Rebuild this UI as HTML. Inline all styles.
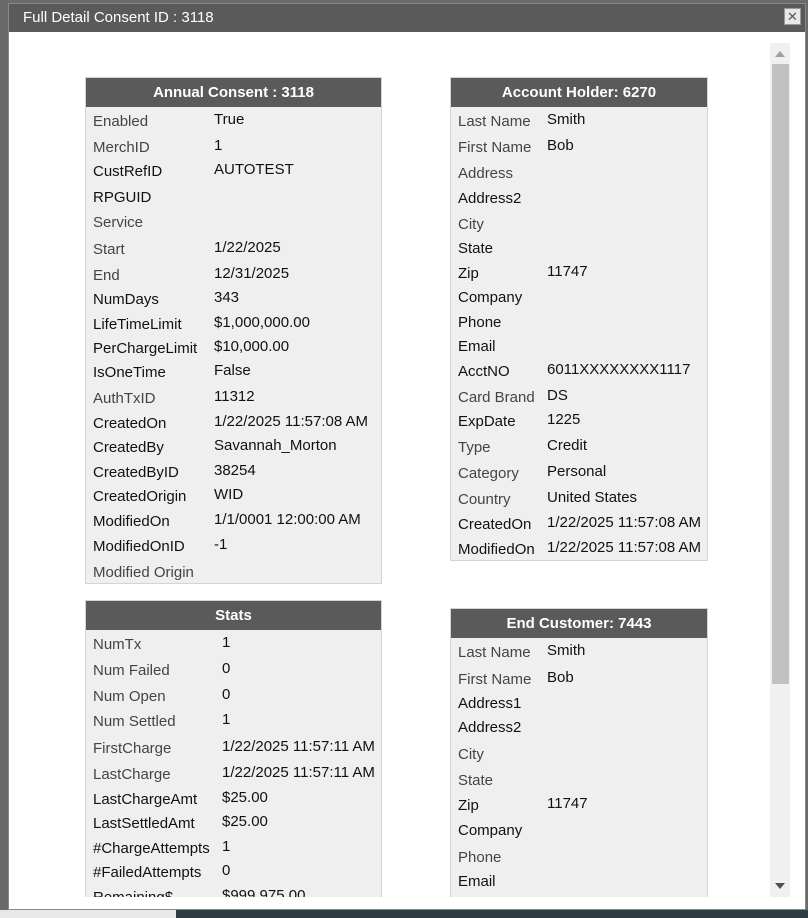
<!DOCTYPE html>
<html><head><style>
*{margin:0;padding:0;box-sizing:border-box}
body{width:808px;height:918px;overflow:hidden;background:#6a6a6a;font-family:"Liberation Sans",Arial,sans-serif;position:relative}
.dlg{position:absolute;left:8px;top:3px;width:798px;height:907px;background:#fff;border:1px solid #888}
.tb{position:absolute;left:0;top:0;width:100%;height:28px;background:#5a5a5a;color:#fff;font-size:15px;line-height:28px;padding-left:14px}
.x{position:absolute;right:4px;top:4px;width:17px;height:17px;background:#e8e8e8;border:1px solid #999;color:#555;font-size:13px;line-height:15px;text-align:center}
.p{position:absolute;background:#efefef;border:1px solid #d4d4d4}
.h{position:absolute;left:0;top:0;width:100%;height:29px;background:#5a5a5a;color:#fff;font-weight:bold;font-size:15px;line-height:29px;text-align:center}
.r{position:absolute;font-size:15px;color:#111;white-space:nowrap;line-height:18px}
.g{color:#444}
.sb{position:absolute;left:770px;top:43px;width:20px;height:854px;background:#f0f0f0}
.th{position:absolute;left:2px;top:21px;width:17px;height:620px;background:#c1c1c1}
.bot{position:absolute;left:0;top:910px;width:808px;height:8px;background:#2e3c44}
.bot2{position:absolute;left:0;top:910px;width:176px;height:8px;background:#e8e8e8}
</style></head><body>
<div class="bot"></div><div class="bot2"></div>
<div class="dlg">
<div class="tb">Full Detail Consent ID : 3118</div><div class="x">✕</div>
</div>
<div class="sb"><div style="position:absolute;left:5px;top:8px;border:5px solid transparent;border-bottom:6px solid #a0a0a0;border-top:0"></div><div class="th"></div><div style="position:absolute;left:5px;bottom:8px;border:5px solid transparent;border-top:6px solid #505050;border-bottom:0"></div></div>
<div style="position:absolute;left:0;top:0;width:808px;height:897px;overflow:hidden">
<div class="p" style="left:85px;top:77px;width:297px;height:507px"><div class="h">Annual Consent : 3118</div></div>
<div class="p" style="left:450px;top:77px;width:258px;height:484px"><div class="h">Account Holder: 6270</div></div>
<div class="p" style="left:85px;top:600px;width:297px;height:320px"><div class="h">Stats</div></div>
<div class="p" style="left:450px;top:608px;width:258px;height:320px"><div class="h">End Customer: 7443</div></div>
<div id="rows"></div>
</div>
<script>
function add(x1,x2,rows){var h='';rows.forEach(function(r){var t=r[0]-8;h+='<div class="r'+(r[3]?' g':'')+'" style="left:'+x1+'px;top:'+(t+1)+'px">'+r[1]+'</div><div class="r" style="left:'+x2+'px;top:'+(t-1)+'px">'+(r[2]||'')+'</div>';});document.getElementById('rows').insertAdjacentHTML('beforeend',h);}
add(93,214,[[120,'Enabled','True',1],[146,'MerchID','1',1],[170,'CustRefID','AUTOTEST'],[196,'RPGUID',''],[221,'Service','',1],[248,'Start','1/22/2025',1],[274,'End','12/31/2025',1],[298,'NumDays','343'],[323,'LifeTimeLimit','$1,000,000.00'],[347,'PerChargeLimit','$10,000.00'],[371,'IsOneTime','False'],[397,'AuthTxID','11312',1],[422,'CreatedOn','1/22/2025 11:57:08 AM'],[446,'CreatedBy','Savannah_Morton'],[471,'CreatedByID','38254'],[495,'CreatedOrigin','WID'],[520,'ModifiedOn','1/1/0001 12:00:00 AM'],[545,'ModifiedOnID','-1'],[571,'Modified Origin','',1]]);
add(458,547,[[120,'Last Name','Smith',1],[146,'First Name','Bob',1],[172,'Address','',1],[197,'Address2',''],[223,'City','',1],[247,'State',''],[272,'Zip','11747'],[296,'Company',''],[321,'Phone',''],[345,'Email',''],[370,'AcctNO','6011XXXXXXXX1117'],[396,'Card Brand','DS',1],[420,'ExpDate','1225'],[446,'Type','Credit',1],[472,'Category','Personal',1],[498,'Country','United States',1],[523,'CreatedOn','1/22/2025 11:57:08 AM'],[548,'ModifiedOn','1/22/2025 11:57:08 AM']]);
add(93,222,[[643,'NumTx','1',1],[669,'Num Failed','0',1],[695,'Num Open','0',1],[720,'Num Settled','1',1],[747,'FirstCharge','1/22/2025 11:57:11 AM',1],[773,'LastCharge','1/22/2025 11:57:11 AM',1],[798,'LastChargeAmt','$25.00'],[822,'LastSettledAmt','$25.00'],[847,'#ChargeAttempts','1'],[871,'#FailedAttempts','0'],[896,'Remaining$','$999,975.00']]);
add(458,547,[[651,'Last Name','Smith',1],[678,'First Name','Bob',1],[702,'Address1',''],[726,'Address2',''],[753,'City','',1],[779,'State','',1],[804,'Zip','11747'],[829,'Company',''],[856,'Phone','',1],[880,'Email','']]);
</script>
</body></html>
